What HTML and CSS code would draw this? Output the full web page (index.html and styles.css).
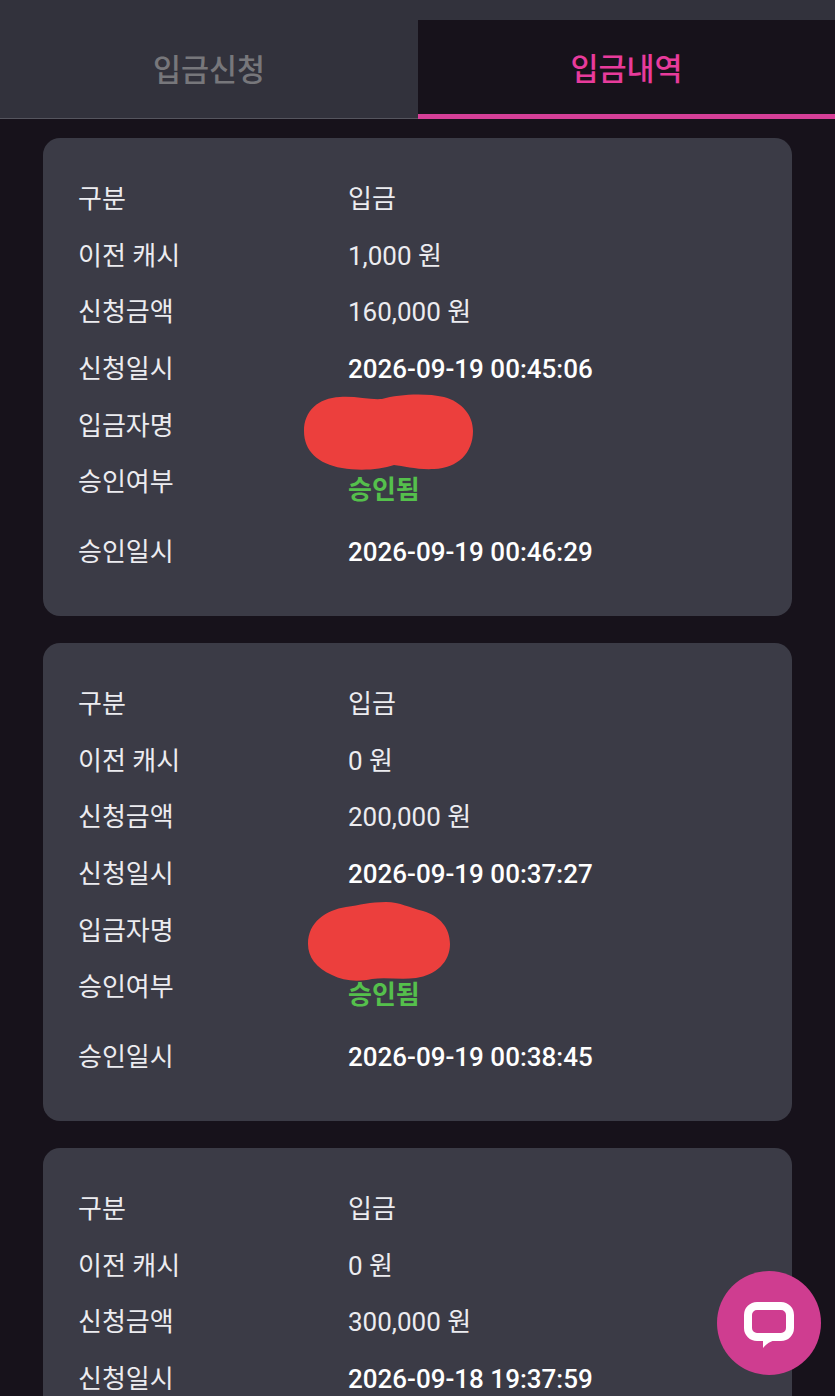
FILE: index.html
```html
<!DOCTYPE html>
<html lang="ko">
<head>
<meta charset="utf-8">
<title>입금내역</title>
<link rel="stylesheet" href="styles.css">
</head>
<body>
<div class="page">
  <div class="topbar"></div>
  <nav class="tabs">
    <div class="tab">입금신청</div>
    <div class="tab tab-active">입금내역</div>
  </nav>
  <main class="list">
    <section class="card">
      <div class="row"><span>구분</span><span>입금</span></div>
      <div class="row"><span>이전 캐시</span><span>1,000 원</span></div>
      <div class="row"><span>신청금액</span><span>160,000 원</span></div>
      <div class="row"><span>신청일시</span><span class="strong">2026-09-19 00:45:06</span></div>
      <div class="row"><span>입금자명</span><span></span></div>
      <div class="row row-status"><span>승인여부</span><span class="status">승인됨</span></div>
      <div class="row"><span>승인일시</span><span class="strong">2026-09-19 00:46:29</span></div>
      <svg class="scribble scribble-a" viewBox="0 0 170 78" aria-hidden="true"><path d="M0 38C0 18 14 5 36 4C52 3 66 7 78 6C95 1 122 0 140 4C158 9 169 22 169 38C169 60 154 75 130 76C114 77 100 73 90 72C76 77 54 78 38 75C14 71 0 58 0 38Z"/></svg>
    </section>
    <section class="card">
      <div class="row"><span>구분</span><span>입금</span></div>
      <div class="row"><span>이전 캐시</span><span>0 원</span></div>
      <div class="row"><span>신청금액</span><span>200,000 원</span></div>
      <div class="row"><span>신청일시</span><span class="strong">2026-09-19 00:37:27</span></div>
      <div class="row"><span>입금자명</span><span></span></div>
      <div class="row row-status"><span>승인여부</span><span class="status">승인됨</span></div>
      <div class="row"><span>승인일시</span><span class="strong">2026-09-19 00:38:45</span></div>
      <svg class="scribble scribble-b" viewBox="0 0 142 80" aria-hidden="true"><path d="M0 42C0 20 18 8 38 5C52 3 62 0 78 0C92 0 102 6 115 9C132 14 142 26 142 42C142 60 128 73 108 76C92 78 78 75 64 77C50 80 35 79 24 73C8 66 0 55 0 42Z"/></svg>
    </section>
    <section class="card">
      <div class="row"><span>구분</span><span>입금</span></div>
      <div class="row"><span>이전 캐시</span><span>0 원</span></div>
      <div class="row"><span>신청금액</span><span>300,000 원</span></div>
      <div class="row"><span>신청일시</span><span class="strong">2026-09-18 19:37:59</span></div>
    </section>
  </main>
  <button class="chat" type="button" aria-label="채팅">
    <svg viewBox="0 0 50 50" width="50" height="50" aria-hidden="true">
      <rect x="4" y="8" width="42" height="31" rx="9" fill="none" stroke="#fff" stroke-width="8"/>
      <path d="M19 38V50C24 44 29 42 37 41V38Z" fill="#fff"/>
    </svg>
  </button>
</div>
</body>
</html>
```
FILE: styles.css
```css
* { box-sizing: border-box; }
html, body { margin: 0; padding: 0; }
body {
  background: #17121b;
  color: #ececf0;
  font-family: Roboto, "Noto Sans CJK KR", sans-serif;
}
.page {
  position: relative;
  width: 835px;
  height: 1396px;
  overflow: hidden;
}
.topbar {
  height: 20px;
  background: #32323c;
}
.tabs {
  display: grid;
  grid-template-columns: 418px 417px;
  height: 99px;
  background: #32323c;
  border-bottom: 1px solid #55555e;
}
.tab {
  display: flex;
  align-items: center;
  justify-content: center;
  padding-bottom: 4px;
  font-size: 30.5px;
  font-weight: 500;
  color: #77777b;
}
.tab-active {
  height: 99px;
  background: #17121b;
  color: #e83b9c;
  border-bottom: 5px solid #d63f98;
  padding-bottom: 1px;
}
.list {
  display: flex;
  flex-direction: column;
  gap: 27px;
  padding: 19px 43px 0;
}
.card {
  position: relative;
  flex: none;
  height: 478px;
  padding: 33px 35px 36px;
  background: #3b3b46;
  border-radius: 17px;
}
.row {
  display: grid;
  grid-template-columns: 270px 1fr;
  align-items: start;
  height: 56.7px;
  font-size: 26px;
  line-height: 56.7px;
}
.row-status { height: 69.5px; }
.strong { font-weight: 500; color: #fff; }
.status {
  padding-top: 8px;
  font-weight: 700;
  color: #55c04c;
}
.scribble {
  position: absolute;
  fill: #ec3f3d;
}
.scribble-a { left: 261px; top: 255px; width: 170px; height: 78px; }
.scribble-b { left: 265px; top: 259px; width: 142px; height: 80px; }
.chat {
  position: absolute;
  left: 717px;
  top: 1271px;
  display: flex;
  align-items: center;
  justify-content: center;
  width: 104px;
  height: 104px;
  padding: 0;
  border: 0;
  border-radius: 50%;
  background: #cf3d90;
}
```
